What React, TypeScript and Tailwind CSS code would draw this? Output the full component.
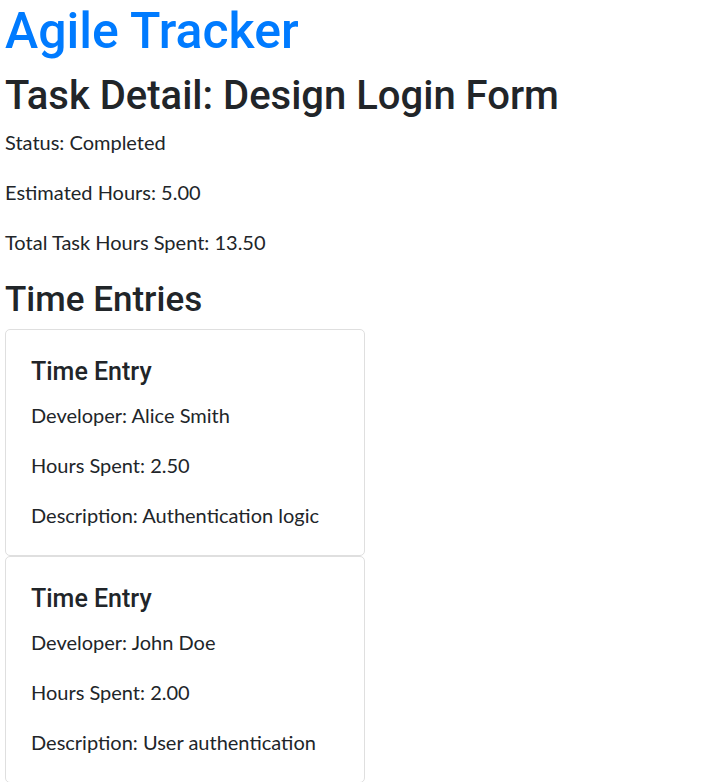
function TimeEntry({ dev, hours, desc }: { dev: string; hours: string; desc: string }) {
  return (
    <div className="border border-[#dfdfdf] rounded-[5px] bg-white">
      <div className="p-[25px]">
        <h5
          className="pt-[2px] text-[25px] leading-[30px] font-medium mb-[13px]"
          style={{ fontFamily: "Roboto, sans-serif" }}
        >
          Time Entry
        </h5>
        <p className="mb-[20px]">Developer: {dev}</p>
        <p className="mb-[20px]">Hours Spent: {hours}</p>
        <p>Description: {desc}</p>
      </div>
    </div>
  );
}

export default function App() {
  const heading = { fontFamily: "Roboto, sans-serif" };
  return (
    <div
      className="min-h-[782px] bg-white text-[#212529] text-[20px] leading-[30px] pl-[5px]"
      style={{ fontFamily: "Lato, 'Open Sans', sans-serif" }}
    >
      <h1 className="pt-px text-[50px] leading-[60px] font-medium text-[#007bff] mb-[8px]" style={heading}>
        Agile Tracker
      </h1>
      <h2 className="pt-[3px] text-[40px] leading-[48px] font-medium mb-[7px]" style={heading}>
        Task Detail: Design Login Form
      </h2>
      <p className="mb-[20px]">Status: Completed</p>
      <p className="mb-[20px]">Estimated Hours: 5.00</p>
      <p className="mb-[20px]">Total Task Hours Spent: 13.50</p>
      <h3 className="pt-[2px] text-[35px] leading-[42px] font-medium mb-[8px]" style={heading}>
        Time Entries
      </h3>
      <div className="w-[360px] flex flex-col">
        <TimeEntry dev="Alice Smith" hours="2.50" desc="Authentication logic" />
        <TimeEntry dev="John Doe" hours="2.00" desc="User authentication" />
      </div>
    </div>
  );
}
